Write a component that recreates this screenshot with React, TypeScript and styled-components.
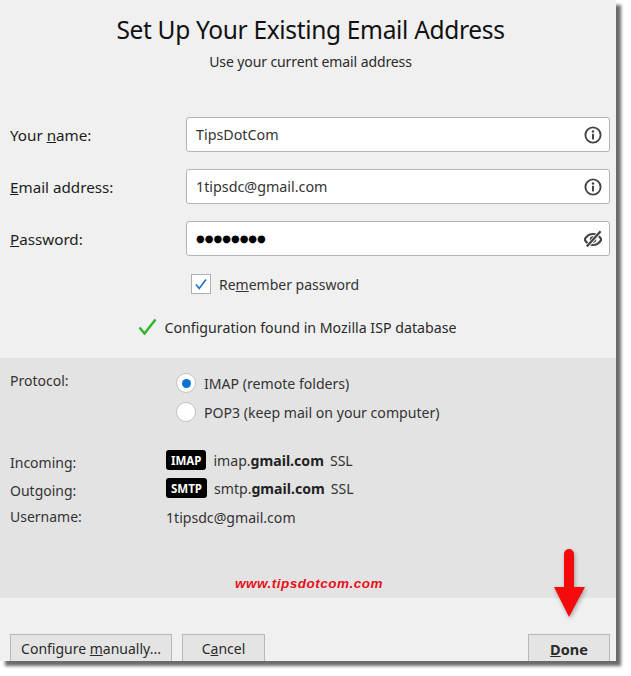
import styled, { createGlobalStyle } from "styled-components";

const GlobalStyle = createGlobalStyle`
  html, body {
    margin: 0;
    padding: 0;
    background: #fff;
  }
  * {
    box-sizing: border-box;
  }
`;

const Page = styled.main`
  width: 631px;
  height: 676px;
  background: #fff;
`;

const Dialog = styled.div`
  position: relative;
  width: 616px;
  height: 661px;
  display: flex;
  flex-direction: column;
  background: #f0f0f0;
  color: #1c1c1c;
  font-family: "Noto Sans", "Open Sans", sans-serif;
  font-size: 14px;
  box-shadow: 5px 5px 3px rgba(70, 70, 70, 0.8);
`;

const Header = styled.header`
  height: 117px;
  padding: 12px 0 0 5px;
  text-align: center;
`;

const Title = styled.h1`
  margin: 0;
  font-size: 24.5px;
  line-height: 36px;
  font-weight: 400;
  letter-spacing: -0.33px;
  color: #111;
`;

const Subtitle = styled.p`
  margin: 0;
  padding-top: 4px;
  font-size: 14px;
  line-height: 20px;
  letter-spacing: -0.1px;
  color: #2a2a2a;
`;

const Form = styled.div`
  display: flex;
  flex-direction: column;
  gap: 17px;
  padding: 0 6px 0 10px;
`;

const Row = styled.div`
  display: grid;
  grid-template-columns: 176px 424px;
  align-items: center;
`;

const FieldLabel = styled.label`
  font-size: 15.2px;
  line-height: 20px;
`;

const Field = styled.div`
  height: 35px;
  display: flex;
  align-items: center;
  justify-content: space-between;
  padding: 0 7px 0 9px;
  background: #fff;
  border: 1px solid #b4b4b4;
  border-radius: 3px;
  font-size: 14.3px;
  color: #333;
`;

const Dots = styled.span`
  font-size: 10px;
  color: #000;
  font-family: "DejaVu Sans", sans-serif;
`;

const RememberRow = styled.div`
  display: flex;
  align-items: center;
  gap: 8px;
  margin: 18px 0 0 191px;
  height: 20px;
  font-size: 14px;
  color: #333;
`;

const CheckBox = styled.span`
  width: 20px;
  height: 20px;
  display: flex;
  align-items: center;
  justify-content: center;
  background: #fff;
  border: 1px solid #b0b0b0;
`;

const Status = styled.div`
  display: flex;
  align-items: center;
  justify-content: center;
  gap: 8px;
  margin: 23px 0 0 -22px;
  height: 20px;
  font-size: 14.2px;
  color: #2a2a2a;
`;

const Panel = styled.section`
  display: flex;
  flex-direction: column;
  height: 240px;
  margin-top: 21px;
  padding: 14px 0 0 10px;
  background: #e3e3e3;
  color: #333;
`;

const ProtocolRow = styled.div`
  display: flex;
  height: 60px;
`;

const PanelLabel = styled.div`
  width: 156px;
  font-size: 14px;
  line-height: 18px;
`;

const ProtocolLabel = styled(PanelLabel)`
  width: 166px;
`;

const RadioGroup = styled.div`
  display: flex;
  flex-direction: column;
  gap: 9px;
  padding-top: 1px;
`;

const RadioRow = styled.div`
  display: flex;
  align-items: center;
  gap: 8px;
  height: 20px;
  font-size: 14.1px;
  white-space: nowrap;
`;

const Radio = styled.span<{ $checked?: boolean }>`
  width: 20px;
  height: 20px;
  display: flex;
  align-items: center;
  justify-content: center;
  background: #fff;
  border: 1px solid #c2c2c2;
  border-radius: 50%;

  &::after {
    content: "";
    width: 9px;
    height: 9px;
    border-radius: 50%;
    background: ${(props) => (props.$checked ? "#0a74d6" : "transparent")};
  }
`;

const ServerList = styled.div`
  display: flex;
  flex-direction: column;
  margin-top: 14px;
`;

const ServerRow = styled.div<{ $height: number }>`
  display: flex;
  align-items: center;
  height: ${(props) => props.$height}px;
  white-space: nowrap;
  font-size: 14.1px;
`;

const ServerLabel = styled(PanelLabel)<{ $drop?: number }>`
  padding-top: ${(props) => props.$drop ?? 0}px;
`;

const Badge = styled.span`
  display: inline-flex;
  align-items: center;
  justify-content: center;
  height: 20px;
  padding: 0 5px;
  margin-right: 7px;
  background: #000;
  border-radius: 3px;
  color: #fff;
  font-size: 11.5px;
  font-weight: 700;
`;

const Strong = styled.strong`
  font-weight: 700;
  color: #222;
  margin-right: 6px;
`;

const Watermark = styled.div`
  margin-top: 43px;
  padding-right: 8px;
  text-align: center;
  color: #e8101a;
  font-family: "Liberation Sans", sans-serif;
  font-size: 13.5px;
  line-height: 18px;
  font-weight: 700;
  font-style: italic;
  letter-spacing: 0.5px;
`;

const Footer = styled.footer`
  display: flex;
  align-items: flex-start;
  gap: 10px;
  margin-top: 36px;
  padding: 0 6px 0 10px;
  height: 27px;
`;

const Button = styled.button<{ $width: number; $bold?: boolean }>`
  width: ${(props) => props.$width}px;
  height: 27px;
  padding: 1px 0 0;
  background: #e4e4e4;
  border: 1px solid #b8b8b8;
  border-bottom: 0;
  font-family: inherit;
  font-size: ${(props) => (props.$bold ? "14.5px" : "14px")};
  font-weight: ${(props) => (props.$bold ? 700 : 400)};
  color: #2a2a2a;
`;

const Spacer = styled.div`
  flex: 1;
`;

const Arrow = styled.svg`
  position: absolute;
  left: 553px;
  top: 546px;
  filter: drop-shadow(1px 2px 2px rgba(0, 0, 0, 0.3));
`;

function InfoIcon() {
  return (
    <svg width="18" height="18" viewBox="0 0 18 18">
      <circle cx="9" cy="9" r="7.6" fill="none" stroke="#444" strokeWidth="1.9" />
      <circle cx="9" cy="5.5" r="1.2" fill="#444" />
      <rect x="8" y="7.8" width="2" height="5.6" fill="#444" />
    </svg>
  );
}

function EyeOffIcon() {
  return (
    <svg width="18" height="18" viewBox="0 0 18 18">
      <path
        d="M0.6 9.5C2.6 6 5.6 4 9 4s6.4 2 8.4 5.5C15.4 13 12.4 15 9 15S2.6 13 0.6 9.5Z"
        fill="none"
        stroke="#444"
        strokeWidth="2.2"
      />
      <circle cx="9" cy="9.5" r="3.2" fill="#444" />
      <path d="M3 16.5L16.5 1.5" stroke="#f7f7f7" strokeWidth="4" />
      <path d="M2.8 16.6L16.6 1.2" stroke="#444" strokeWidth="2.2" />
    </svg>
  );
}

export default function App() {
  return (
    <Page>
      <GlobalStyle />
      <Dialog>
        <Header>
          <Title>Set Up Your Existing Email Address</Title>
          <Subtitle>Use your current email address</Subtitle>
        </Header>

        <Form>
          <Row>
            <FieldLabel>
              Your <u>n</u>ame:
            </FieldLabel>
            <Field>
              TipsDotCom
              <InfoIcon />
            </Field>
          </Row>
          <Row>
            <FieldLabel>
              <u>E</u>mail address:
            </FieldLabel>
            <Field>
              1tipsdc@gmail.com
              <InfoIcon />
            </Field>
          </Row>
          <Row>
            <FieldLabel>
              <u>P</u>assword:
            </FieldLabel>
            <Field>
              <Dots>●●●●●●●●</Dots>
              <EyeOffIcon />
            </Field>
          </Row>
        </Form>

        <RememberRow>
          <CheckBox>
            <svg width="14" height="14" viewBox="0 0 14 14">
              <path d="M2 7.5L5.2 11.5L12 2.5" fill="none" stroke="#1a73c8" strokeWidth="1.6" />
            </svg>
          </CheckBox>
          <span>
            Re<u>m</u>ember password
          </span>
        </RememberRow>

        <Status>
          <svg width="19" height="18" viewBox="0 0 19 18">
            <path d="M1.5 9.5L6.5 15.5L17.5 1.5" fill="none" stroke="#2fb52a" strokeWidth="2.4" />
          </svg>
          <span>Configuration found in Mozilla ISP database</span>
        </Status>

        <Panel>
          <ProtocolRow>
            <ProtocolLabel>Protocol:</ProtocolLabel>
            <RadioGroup>
              <RadioRow>
                <Radio $checked />
                IMAP (remote folders)
              </RadioRow>
              <RadioRow>
                <Radio />
                POP3 (keep mail on your computer)
              </RadioRow>
            </RadioGroup>
          </ProtocolRow>

          <ServerList>
            <ServerRow $height={28}>
              <ServerLabel $drop={6}>Incoming:</ServerLabel>
              <Badge>IMAP</Badge>
              imap.<Strong>gmail.com</Strong>SSL
            </ServerRow>
            <ServerRow $height={28}>
              <ServerLabel $drop={6}>Outgoing:</ServerLabel>
              <Badge>SMTP</Badge>
              smtp.<Strong>gmail.com</Strong>SSL
            </ServerRow>
            <ServerRow $height={30}>
              <ServerLabel>Username:</ServerLabel>
              1tipsdc@gmail.com
            </ServerRow>
          </ServerList>

          <Watermark>www.tipsdotcom.com</Watermark>
        </Panel>

        <Footer>
          <Button $width={162}>
            Configure <u>m</u>anually...
          </Button>
          <Button $width={83}>
            C<u>a</u>ncel
          </Button>
          <Spacer />
          <Button $width={82} $bold>
            <u>D</u>one
          </Button>
        </Footer>

        <Arrow width="32" height="72" viewBox="0 0 32 72">
          <path d="M11 8a5 5 0 0 1 10 0V41h11L16 71L1 41H11Z" fill="#f40a0a" />
        </Arrow>
      </Dialog>
    </Page>
  );
}
